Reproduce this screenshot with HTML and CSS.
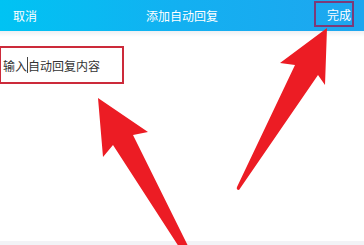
FILE: index.html
```html
<!DOCTYPE html>
<html lang="zh-CN">
<head>
<meta charset="utf-8">
<link rel="stylesheet" href="styles.css">
</head>
<body>
<div class="app">
  <header class="bar">
    <span class="bar-left">取消</span>
    <span class="bar-title">添加自动回复</span>
    <span class="bar-right"><span class="done">完成</span></span>
  </header>
  <div class="shade"></div>
  <main class="content">
    <div class="input">输入<span class="caret"></span>自动回复内容</div>
  </main>
  <div class="foot"></div>
  <svg class="arrows" width="364" height="245" viewBox="0 0 364 245">
    <path d="M98 98 L148 132 L133 135 L190 250 L181 250 L113 145 L103 157 Z" fill="#ec1c24"/>
    <path d="M327 28 L325 85 L318 75 L239 190 Q236 190 237 187 L295 65 L280 63 Z" fill="#ec1c24"/>
  </svg>
</div>
</body>
</html>
```
FILE: styles.css
```css
html, body {
  margin: 0;
  padding: 0;
  background: #ffffff;
}
.app {
  position: relative;
  width: 364px;
  height: 245px;
  overflow: hidden;
  display: flex;
  flex-direction: column;
  font-family: "Noto Sans CJK SC", "Noto Sans", sans-serif;
}
.bar {
  height: 31px;
  flex: none;
  display: grid;
  grid-template-columns: 1fr auto 1fr;
  align-items: center;
  background: linear-gradient(90deg, #00c3f3 0%, #13b0f1 50%, #1ea6ef 100%);
  color: #ffffff;
  font-size: 12px;
}
.bar-left {
  padding-left: 13px;
}
.bar-right {
  display: flex;
  justify-content: flex-end;
  padding-right: 10px;
  align-self: start;
}
.done {
  margin-top: 1px;
  height: 22px;
  width: 35px;
  border: 2px solid #7d3a78;
  display: flex;
  align-items: center;
  justify-content: flex-end;
  padding-right: 1px;
  box-sizing: content-box;
}
.shade {
  height: 6px;
  flex: none;
  background: linear-gradient(180deg, #eef0f3, #ffffff);
}
.content {
  flex: 1;
  padding-top: 9px;
}
.input {
  width: 119px;
  height: 34px;
  border: 2px solid #cc2a3a;
  border-left-width: 1px;
  display: flex;
  align-items: center;
  padding-left: 2px;
  color: #333333;
  font-size: 12px;
  box-sizing: content-box;
}
.caret {
  display: inline-block;
  width: 0;
  height: 16px;
  border-left: 1px solid #444444;
}
.foot {
  height: 4px;
  flex: none;
  background: #f2f3f6;
}
.arrows {
  position: absolute;
  left: 0;
  top: 0;
}
```
